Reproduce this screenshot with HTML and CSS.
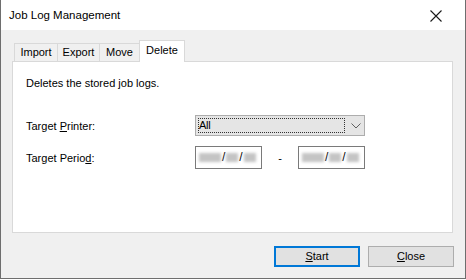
FILE: index.html
```html
<!DOCTYPE html>
<html>
<head>
<meta charset="utf-8">
<link rel="stylesheet" href="styles.css">
</head>
<body>
<div class="window">
  <div class="titlebar">
    <span class="title">Job Log Management</span>
    <svg class="close-x" width="12" height="12" viewBox="0 0 12 12"><path d="M0.5 0.5 L11.5 11.5 M11.5 0.5 L0.5 11.5" stroke="#1a1a1a" stroke-width="1.1" fill="none"/></svg>
  </div>
  <div class="client">
    <div class="tabs">
      <div class="tab t-import">Import</div>
      <div class="tab t-export">Export</div>
      <div class="tab t-move">Move</div>
      <div class="tab active">Delete</div>
    </div>
    <div class="panel">
      <p class="desc">Deletes the stored job logs.</p>
      <div class="row row-printer">
        <span class="label">Target <u>P</u>rinter:</span>
        <div class="combo">
          <span class="combo-focus"><span class="combo-text">All</span></span>
          <svg class="chev" width="10" height="6" viewBox="0 0 10 6"><path d="M0.5 0.5 L5 5 L9.5 0.5" stroke="#606060" stroke-width="1" fill="none"/></svg>
        </div>
      </div>
      <div class="row row-period">
        <span class="label">Target Perio<u>d</u>:</span>
        <div class="date">
          <span class="blur b-year"></span><span class="slash">/</span><span class="blur b-md"></span><span class="slash">/</span><span class="blur b-md"></span>
        </div>
        <span class="dash">-</span>
        <div class="date">
          <span class="blur b-year"></span><span class="slash">/</span><span class="blur b-md"></span><span class="slash">/</span><span class="blur b-md"></span>
        </div>
      </div>
    </div>
    <div class="buttons">
      <button class="btn default"><u>S</u>tart</button>
      <button class="btn"><u>C</u>lose</button>
    </div>
  </div>
</div>
</body>
</html>
```
FILE: styles.css
```css
html, body {
  margin: 0;
  padding: 0;
  background: #ffffff;
}
body {
  font-family: "Liberation Sans", Arial, sans-serif;
  font-size: 11px;
  color: #000;
}
.window {
  width: 466px;
  height: 279px;
  box-sizing: border-box;
  border: 1px solid #6e6e6e;
  border-top: none;
  background: #f0f0f0;
  display: flex;
  flex-direction: column;
}
.titlebar {
  height: 30px;
  background: #ffffff;
  display: flex;
  align-items: center;
  padding-left: 8px;
  padding-right: 23px;
  flex: none;
}
.title {
  font-size: 11.5px;
  color: #000;
  margin-top: -1px;
}
.close-x {
  margin-left: auto;
  margin-top: 1px;
}
.client {
  flex: 1;
  display: flex;
  flex-direction: column;
  padding-top: 11px;
}
.tabs {
  display: flex;
  align-items: flex-end;
  height: 20px;
  margin-left: 13px;
  position: relative;
  z-index: 1;
}
.tab {
  height: 18px;
  box-sizing: border-box;
  border: 1px solid #d9d9d9;
  border-bottom: none;
  border-right: none;
  background: #f0f0f0;
  text-align: center;
  line-height: 17px;
}
.t-import {
  width: 43px;
}
.t-export {
  width: 42px;
}
.t-move {
  width: 41px;
  border-right: 1px solid #d9d9d9;
}
.tab.active {
  width: 46px;
  height: 22px;
  margin-bottom: -1px;
  background: #ffffff;
  border: 1px solid #d9d9d9;
  border-bottom: none;
  line-height: 19px;
  margin-left: -1px;
}
.panel {
  margin-left: 11px;
  width: 441px;
  height: 172px;
  box-sizing: border-box;
  background: #ffffff;
  border: 1px solid #d9d9d9;
  padding: 13px 0 0 13px;
}
.desc {
  margin: 0;
  line-height: 16px;
}
.row {
  display: flex;
  align-items: center;
}
.label {
  width: 169px;
  flex: none;
}
.row-printer {
  margin-top: 24px;
  height: 21px;
}
.row-period {
  margin-top: 10px;
  height: 23px;
}
.combo {
  width: 170px;
  height: 21px;
  box-sizing: border-box;
  border: 1px solid #adadad;
  background: #e5e5e5;
  display: flex;
  align-items: center;
  padding: 2px;
}
.combo-focus {
  width: 147px;
  height: 15px;
  box-sizing: border-box;
  border: 1px dotted #333;
  display: flex;
  align-items: center;
}
.combo-text {
  line-height: 13px;
  letter-spacing: -0.3px;
}
.chev {
  margin-left: 6px;
}
.date {
  width: 67px;
  height: 23px;
  box-sizing: border-box;
  border: 1px solid #7a7a7a;
  background: #ffffff;
  display: flex;
  align-items: center;
  padding-left: 3px;
}
.blur {
  display: inline-block;
  height: 9px;
  background: #c4c4c4;
  filter: blur(1.5px);
}
.b-year {
  width: 22px;
}
.b-md {
  width: 12px;
}
.slash {
  font-size: 12px;
  line-height: 13px;
  color: #000;
  margin: 0 1px;
}
.dash {
  width: 36px;
  text-align: center;
  flex: none;
}
.buttons {
  display: flex;
  justify-content: flex-end;
  gap: 8px;
  margin-top: 13px;
  padding-right: 11px;
}
.btn {
  width: 86px;
  height: 21px;
  box-sizing: border-box;
  border: 1px solid #adadad;
  background: #e1e1e1;
  font-family: "Liberation Sans", Arial, sans-serif;
  font-size: 11px;
  color: #000;
  padding: 0;
  line-height: 17px;
}
.btn.default {
  border: 2px solid #0078d7;
}
```
